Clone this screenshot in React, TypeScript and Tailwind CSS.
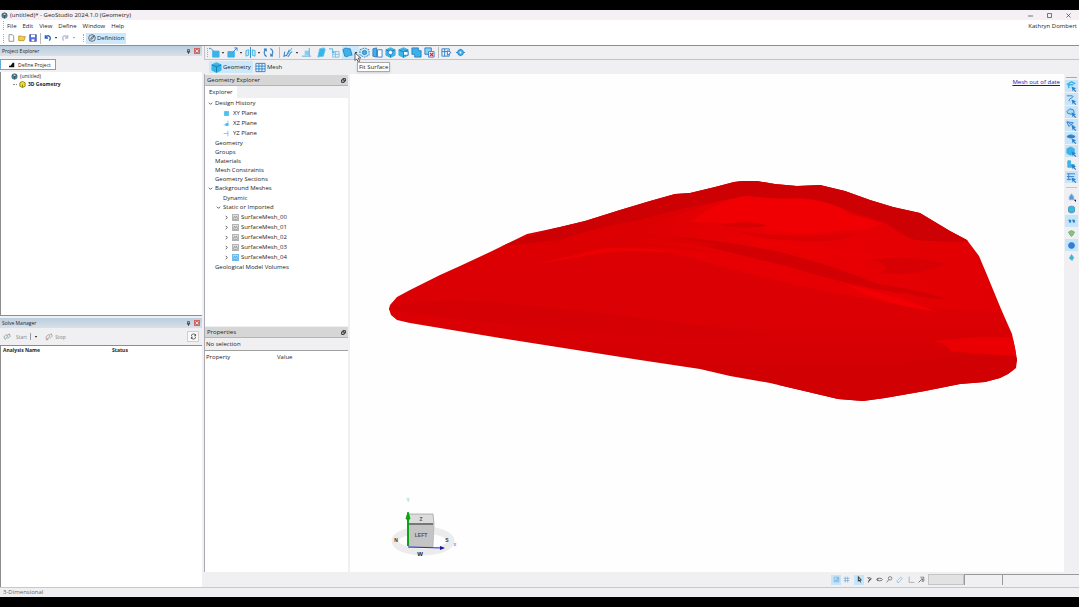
import { useState, type ReactNode } from 'react';

const blue = '#3bb3e6';
const dark = '#2f7fc8';

interface TreeItem {
  label: string;
  indent: string;
  kind?: 'group' | 'plane' | 'mesh';
  icon?: ReactNode;
}

function Svg({ children, size = 'size-[11px]' }: { children: ReactNode; size?: string }) {
  return (
    <svg viewBox="0 0 12 12" className={`${size} shrink-0`} fill="none" stroke={dark} strokeWidth="1">
      {children}
    </svg>
  );
}

const Cube = () => (
  <>
    <path d="M6 .8 11 3v6L6 11.4 1 9V3Z" fill={blue} stroke={blue} />
    <path d="M1 3l5 2.3L11 3M6 5.3v6" stroke="#1479b4" />
  </>
);

const Grid = () => (
  <>
    <path d="M1 1.5h10v9H1z" fill="#eaf6fd" />
    <path d="M1 4.5h10M1 7.5h10M4.3 1.5v9M7.6 1.5v9" />
  </>
);

const Caret = () => (
  <svg viewBox="0 0 4 4" className="size-[4px] shrink-0">
    <path d="M.8 1h2.4L2 2.800Z" fill="#222" />
  </svg>
);

const Pointer = () => <path d="M6 6l5 2-2 .9 2.2 2.3-.9.8L8 9.7 7.3 11.5Z" fill={dark} stroke="none" />;

const Globe = () => (
  <svg viewBox="0 0 12 12" className="size-[7px] shrink-0">
    <circle cx="6" cy="6" r="5.2" fill="#4d7f93" />
    <path d="M2 4l4-2 4 2-4 2ZM6 6v5" fill="#c9dde4" stroke="#203c48" />
  </svg>
);

const Grip = () => <span className="h-[9px] w-px shrink-0 border-l border-dotted border-[#a5a8ad]" />;
const Divider = () => <span className="h-[11px] w-px shrink-0 bg-[#b5b8bd]" />;

interface Tool {
  name: string;
  width: string;
  caret?: boolean;
  active?: boolean;
  art: ReactNode;
}

const tools: Tool[] = [
  { name: 'Sketch point', width: 'w-[18px]', caret: true, art: <><path d="M4 4.5h7v6.5H4z" fill={blue} stroke={blue} /><path d="M0 1.5h2l3 3" /></> },
  { name: 'Extrude', width: 'w-[18px]', caret: true, art: <><path d="M1 5h7v6H1z" fill={blue} stroke={blue} /><path d="M7 5l4-4M8 1h3v3" /></> },
  { name: 'Mirror', width: 'w-[18px]', caret: true, art: <><path d="M6 0v12" /><path d="M4 3v6L1 10V4ZM8 3v6l3 1V4Z" fill="#bfe6f8" stroke={blue} /></> },
  { name: 'Rotate', width: 'w-[16px]', art: <path d="M4 10.300A4.600 4.600 0 0 1 3 2.500M8 1.700A4.600 4.600 0 0 1 9 9.500M1 2.300h2.500v2.600M11 9.700H8.500V7.100" strokeWidth="1.200" /> },
];

const sketchTools: Tool[] = [
  { name: 'Draw line', width: 'w-[18px]', caret: true, art: <><path d="M2 5l-1 5 3-1 3-6M5 10c2 1 1-3 5-5" strokeWidth="1.100" /><path d="M5 8l5-7" stroke={blue} /></> },
  { name: 'Add plane', width: 'w-[15px]', art: <><path d="M4 4h5v5H4z" fill="#84d0f1" stroke="none" /><path d="M1 10h10M9 1v9" stroke="#62a9cf" /></> },
  { name: 'Loft', width: 'w-[13px]', art: <path d="M4 2l5-1 1 2-2 7-6 1Z" fill={blue} stroke="#62c2ec" /> },
  { name: 'Import', width: 'w-[13px]', art: <><path d="M4 5h7v6H4zM4 8h7M7 5v6" stroke="#7dbce4" /><path d="M0 2h4v4h2" stroke={blue} /></> },
  { name: 'Fit Surface', width: 'w-[17px]', caret: true, active: true, art: <path d="M1 3c2-3 5-1 8-1l2 7c-3-1-5 3-8 1Z" fill={blue} /> },
  { name: 'Imprint', width: 'w-[13px]', art: <><path d="M1 3l5-2 5 2v6l-5 2-5-2Z" fill="#c5e9fa" strokeDasharray="2 1" /><circle cx="6" cy="6" r="2.300" fill={blue} /></> },
  { name: 'Split', width: 'w-[13px]', art: <><path d="M1 2l4-1v10l-4-1Z" fill={blue} /><path d="M6 3h5v8H6z" fill="#fff" /></> },
  { name: 'Cavity', width: 'w-[13px]', art: <><Cube /><circle cx="6" cy="6" r="2.400" fill="#fff" /></> },
  { name: 'Subtract', width: 'w-[13px]', art: <><Cube /><path d="M6 5h5v4H6z" fill="#fff" /></> },
  { name: 'Union', width: 'w-[13px]', art: <path d="M1 1h7v3h3v7H4V8H1Z" fill={blue} /> },
  { name: 'Delete', width: 'w-[14px]', art: <><path d="M1 1h7v7H1z" fill="#8bd1f3" /><path d="M5 5h6v6H5z" fill="#fff" /><path d="M6.500 6.500l3.500 3.500m0-3.500L6.500 10" stroke="#e12020" strokeWidth="1.300" /></> },
];

const checkTools: Tool[] = [
  { name: 'Mesh settings', width: 'w-[14px]', art: <><path d="M1 2h8v8H1zM1 5h8M4 2v8" /><path d="M7 4l4 2-4 3Z" fill="#fff" /></> },
  { name: 'Inspect', width: 'w-[12px]', art: <><path d="M1 6h10M6 2v8" /><circle cx="6" cy="6" r="3.200" fill={blue} /><circle cx="6" cy="6" r="1" fill="#fff" stroke="none" /></> },
];

function ToolButton({ tool }: { tool: Tool }) {
  return (
    <button
      aria-label={tool.name}
      className={`flex h-[13px] items-center ${tool.width} ${tool.active ? 'bg-[#cde8fb]' : ''}`}
    >
      <Svg>{tool.art}</Svg>
      {tool.caret && <span className="ml-px"><Caret /></span>}
    </button>
  );
}

const meshIcon = (fill: string, line: string) => (
  <svg viewBox="0 0 10 10" className="size-[7px] shrink-0" fill={fill} stroke={line}>
    <path d="M.5.500h9v9h-9z" />
    <path d="M2 7l1.500-4L5 6l1.500-3L8 7M2 8h6" fill="none" />
  </svg>
);

const plane = (d: string, fill: string) => (
  <svg viewBox="0 0 10 10" className="size-[7px] shrink-0">
    <path d={d} fill={fill} stroke="#4cb7e6" />
  </svg>
);

const treeItems: TreeItem[] = [
  { label: 'Design History', indent: 'pl-[2px]', kind: 'group' },
  { label: 'XY Plane', indent: 'pl-[17px]', kind: 'plane', icon: plane('M2 2h6v6H2z', '#4cc2ee') },
  { label: 'XZ Plane', indent: 'pl-[17px]', kind: 'plane', icon: plane('M7 1v6M1 7h8M4 5h3v3H4z', '#4cc2ee') },
  { label: 'YZ Plane', indent: 'pl-[17px]', kind: 'plane', icon: plane('M7 1v8M1 5h6', 'none') },
  { label: 'Geometry', indent: 'pl-[9px]' },
  { label: 'Groups', indent: 'pl-[9px]' },
  { label: 'Materials', indent: 'pl-[9px]' },
  { label: 'Mesh Constraints', indent: 'pl-[9px]' },
  { label: 'Geometry Sections', indent: 'pl-[9px]' },
  { label: 'Background Meshes', indent: 'pl-[2px]', kind: 'group' },
  { label: 'Dynamic', indent: 'pl-[17px]' },
  { label: 'Static or Imported', indent: 'pl-[10px]', kind: 'group' },
  { label: 'SurfaceMesh_00', indent: 'pl-[18px]', kind: 'mesh', icon: meshIcon('#e0e0e0', '#8d8d8d') },
  { label: 'SurfaceMesh_01', indent: 'pl-[18px]', kind: 'mesh', icon: meshIcon('#e0e0e0', '#8d8d8d') },
  { label: 'SurfaceMesh_02', indent: 'pl-[18px]', kind: 'mesh', icon: meshIcon('#e0e0e0', '#8d8d8d') },
  { label: 'SurfaceMesh_03', indent: 'pl-[18px]', kind: 'mesh', icon: meshIcon('#e0e0e0', '#8d8d8d') },
  { label: 'SurfaceMesh_04', indent: 'pl-[18px]', kind: 'mesh', icon: meshIcon('#a5dcfa', '#369ce0') },
  { label: 'Geological Model Volumes', indent: 'pl-[9px]' },
];

function Chevron({ open }: { open: boolean }) {
  return (
    <svg viewBox="0 0 6 6" className="size-[5px] shrink-0" fill="none" stroke="#444">
      <path d={open ? 'M1 2l2 2 2-2' : 'M2 1l2 2-2 2'} />
    </svg>
  );
}

function TreeRow({ item }: { item: TreeItem }) {
  const tall = item.kind ? 'h-[10px]' : 'h-[9px]';
  return (
    <li className={`flex items-center ${tall} ${item.indent}`}>
      {(item.kind === 'group' || item.kind === 'mesh') && (
        <span className={item.kind === 'mesh' ? 'mr-[3px]' : 'mr-[2px]'}>
          <Chevron open={item.kind === 'group'} />
        </span>
      )}
      {item.icon && <span className={item.kind === 'plane' ? 'mr-[3px]' : 'mr-[2px]'}>{item.icon}</span>}
      <span>{item.label}</span>
    </li>
  );
}

function FloatIcon() {
  return (
    <svg viewBox="0 0 8 8" className="size-[5px]" fill="#ddd" stroke="#111" strokeWidth="1.300">
      <path d="M3 1h4v4H3z" />
      <path d="M1 3h4v4H1z" />
    </svg>
  );
}

function PanelHeader({ title }: { title: string }) {
  return (
    <div className="flex h-[11px] shrink-0 items-center justify-between border-b border-[#b4b4b4] bg-[#d6d6d7] px-[2px]">
      <h2>{title}</h2>
      <button aria-label={`Float ${title}`}><FloatIcon /></button>
    </div>
  );
}

function DockHeader({ title }: { title: string }) {
  return (
    <div className="flex h-[10px] shrink-0 items-center justify-between bg-gradient-to-b from-[#bccddd] to-[#d7e1eb] px-[2px]">
      <h2 className="text-[5px]">{title}</h2>
      <div className="flex items-center gap-[3px]">
        <button aria-label={`Pin ${title}`}>
          <svg viewBox="0 0 6 6" className="size-[5px]" stroke="#222" strokeWidth=".8" fill="none"><path d="M2 .5h2v3H2zM1 3.500h4M3 3.500V6" /></svg>
        </button>
        <button aria-label={`Close ${title}`} className="bg-[#cf6862]">
          <svg viewBox="0 0 6 6" className="size-[6px]" stroke="#f3dcda"><path d="M1.500 1.500l3 3m0-3l-3 3" /></svg>
        </button>
      </div>
    </div>
  );
}

function LeftColumn() {
  return (
    <aside className="flex w-[202px] shrink-0 flex-col">
      <section className="flex h-[270px] flex-col border-b border-[#8c8c8c]">
        <DockHeader title="Project Explorer" />
        <div className="h-[16px] shrink-0 pt-[3px]">
          <button className="flex h-[11px] w-[56px] items-center gap-[3px] border border-[#62a8dc] bg-white pl-[8px] text-[5px]">
            <svg viewBox="0 0 8 8" className="size-[6px] shrink-0"><path d="M0 5h2l3-4h2v6H0Z" fill="#111" /></svg>
            Define Project
          </button>
        </div>
        <ul className="flex-1 border-l border-[#8c8c8c] bg-white text-[5px]">
          <li className="flex h-[8px] items-center gap-[2px] pl-[10px]"><Globe />(untitled)</li>
          <li className="flex h-[8px] items-center gap-[2px] pl-[12px] font-bold">
            <span className="w-[4px] border-t border-dotted border-[#888]" />
            <svg viewBox="0 0 8 8" className="size-[7px]"><path d="M4 .5l3 1.500v4L4 7.500 1 6V2Z" fill="#f4e22c" stroke="#8a7a10" /><path d="M4 4v3" stroke="#8a7a10" /></svg>
            3D Geometry
          </li>
        </ul>
      </section>
      <section className="mt-[2px] flex min-h-0 flex-1 flex-col">
        <DockHeader title="Solve Manager" />
        <div className="flex h-[17px] shrink-0 items-center px-[3px] text-[5px] text-[#858585]">
          <button disabled className="flex items-center gap-[5px]">
            <svg viewBox="0 0 10 10" className="size-[8px]" fill="#e6ebeb" stroke="#8b9999"><path d="M1 5l3-3 2 2-3 4ZM5 3l3-2 1 3-3 3" /></svg>
            Start
          </button>
          <span className="mx-[3px] h-[7px] w-px bg-[#999]" />
          <button disabled aria-label="Start options" className="mr-[7px]"><Caret /></button>
          <button disabled className="flex items-center gap-[2px]">
            <svg viewBox="0 0 10 10" className="size-[8px]" fill="#eee" stroke="#a09999"><path d="M1 5l3-3 2 2-3 4ZM5 3l3-2 1 3-3 3" /><path d="M1 7h3v2H1z" fill="#d79a94" stroke="none" /></svg>
            Stop
          </button>
          <button aria-label="Refresh" className="ml-auto flex h-[11px] w-[12px] items-center justify-center border border-[#cfcfcf] bg-[#fafafa]">
            <svg viewBox="0 0 10 10" className="size-[7px]" fill="none" stroke="#333"><path d="M2 4.500A3 3 0 0 1 8 4M8 5.500A3 3 0 0 1 2 6M8 1.500V4H6M2 8.500V6h2" /></svg>
          </button>
        </div>
        <div className="flex-1 border-t border-l border-[#8c8c8c] bg-white">
          <table className="w-full text-left text-[5px] leading-[9px]">
            <thead>
              <tr>
                <th className="w-[111px] pl-[2px]">Analysis Name</th>
                <th>Status</th>
              </tr>
            </thead>
          </table>
        </div>
      </section>
    </aside>
  );
}

function GeometryColumn() {
  return (
    <aside className="flex w-[144px] shrink-0 flex-col border-l border-[#aaaab4] pt-px">
      <section className="flex h-[251px] flex-col">
        <PanelHeader title="Geometry Explorer" />
        <div role="tablist" className="flex h-[12px] shrink-0">
          <button role="tab" aria-selected="true" className="bg-white px-[4px]">Explorer</button>
        </div>
        <ul className="flex-1 bg-white pl-px">
          {treeItems.map((item) => (
            <TreeRow key={item.label} item={item} />
          ))}
        </ul>
      </section>
      <section className="mt-px flex min-h-0 flex-1 flex-col">
        <PanelHeader title="Properties" />
        <p className="h-[12px] shrink-0 pl-px leading-[12px]">No selection</p>
        <div className="flex-1 border-t border-[#a0a0a0] bg-white">
          <table className="w-full text-left leading-[12px]">
            <thead>
              <tr>
                <th className="w-[72px] pl-px font-normal">Property</th>
                <th className="font-normal">Value</th>
              </tr>
            </thead>
          </table>
        </div>
      </section>
    </aside>
  );
}

const outline =
  'M389 309L390 305L397 297L410 290L440 275L460 266L490 252L527 234L560 227L585 221L620 210L650 201L675 194L690 193L715 187L734 182L742 181L757 181L775 184L797 186L820 185L845 191L870 200L893 207L920 213L950 231L967 240L979 256L987 275L1001 309L1012 334L1015 348L1017 360L1016 368L1008 374L1000 378L985 382L960 384L925 391L885 398L863 401L838 399L800 390L770 383L730 376L700 369L640 360L570 349L500 338L410 323L397 320L391 315Z';

function SurfaceModel() {
  return (
    <svg viewBox="350 74 714 498" className="size-full" role="img" aria-label="Surface mesh model">
      <defs>
        <clipPath id="body">
          <path d={outline} />
        </clipPath>
        <linearGradient id="base" x1="0" y1="0" x2="0" y2="1">
          <stop offset="0" stopColor="#de0003" />
          <stop offset=".65" stopColor="#da0003" />
          <stop offset="1" stopColor="#cd0003" />
        </linearGradient>
        <linearGradient id="slope" x1="0" y1="0" x2="1" y2="0">
          <stop offset="0" stopColor="#da0003" />
          <stop offset=".4" stopColor="#ea0003" />
          <stop offset="1" stopColor="#e00003" />
        </linearGradient>
      </defs>
      <path d={outline} fill="url(#base)" />
      <g clipPath="url(#body)">
        <path d="M500 246L675 188L740 175L820 180L920 210L975 240Q940 244 912 240Q900 230 885 223L845 209Q820 199 800 198Q770 199 745 196L710 203Q665 212 640 220Q600 226 560 240Z" fill="#cd0003" />
        <path d="M610 240Q650 226 670 218Q710 202 745 196Q770 200 800 198Q830 200 850 214L885 223Q900 236 915 240L968 243L985 275L1002 312L930 308L850 284L750 260L690 248Z" fill="url(#slope)" />
        <path d="M690 222Q720 200 745 196L782 199Q830 198 850 214L882 223Q870 232 840 230Q800 236 770 229Q740 222 690 222Z" fill="#f00003" />
        <path d="M530 266Q570 256 600 249Q640 245 690 254Q640 250 610 252Q570 258 530 266Z" fill="#ec0003" />
        <path d="M650 247Q720 252 790 263Q850 280 900 295L940 313Q870 300 800 286Q740 272 650 247Z" fill="#e60003" />
        <path d="M668 237Q710 238 780 252Q840 268 870 281L905 294Q845 285 790 267Q740 255 668 237Z" fill="#d20003" />
        <path d="M638 235Q675 235 720 246Q685 245 638 235ZM735 230Q780 239 860 233Q830 246 790 240Q755 240 735 230Z" fill="#dc0003" />
        <path d="M740 238L860 256L920 276M770 243L850 263L910 280M720 236L800 249M800 250L900 258" fill="none" stroke="#f00003" strokeWidth="2" opacity=".4" />
        <path d="M845 284Q890 294 935 311Q880 304 845 284Z" fill="#f20003" />
        <path d="M719 225Q752 219 768 226Q745 230 719 225ZM870 260Q910 254 945 264Q920 277 880 273Q895 265 870 260Z" fill="#d70003" />
        <path d="M876 284Q900 286 945 298Q930 302 876 284Z" fill="#d20003" />
        <path d="M935 341Q980 335 1013 338L1018 356Q980 354 950 351Q950 346 935 341Z" fill="#ea0003" />
        <path d="M840 376Q900 366 950 356Q985 353 1018 357L1010 382L863 404L760 388Z" fill="#d00003" />
        <path d="M386 309Q430 295 520 305Q630 315 770 335Q720 342 640 336Q500 326 386 309Z" fill="#d50003" />
      </g>
    </svg>
  );
}

function NavigationCube() {
  return (
    <svg viewBox="0 0 70 64" className="h-[64px] w-[70px]" fontFamily="Liberation Sans, sans-serif" fontWeight="bold">
      <ellipse cx="33" cy="46" rx="28" ry="11" fill="none" stroke="#ececec" strokeWidth="7" />
      <path d="M19 19h24l1 10H18Z" fill="#dcdcdc" stroke="#999" strokeWidth=".7" />
      <path d="M18 29h26l-1 23H19Z" fill="#c4c4c4" stroke="#b0b0b0" strokeWidth=".7" />
      <path d="M19 29h24" stroke="#333" />
      <text x="31" y="42" fontSize="5" textAnchor="middle" fill="#555">LEFT</text>
      <text x="31" y="26" fontSize="5" textAnchor="middle" fill="#555">Z</text>
      <text x="6" y="47" fontSize="5" textAnchor="middle" fill="#333">N</text>
      <text x="57" y="47" fontSize="5" textAnchor="middle" fill="#333">S</text>
      <text x="30" y="61" fontSize="6" textAnchor="middle" fill="#222">W</text>
      <path d="M18 51V19" stroke="#0ca316" strokeWidth="2" />
      <path d="M18 17l2 7h-4Z" fill="#0ca316" stroke="#0ca316" />
      <path d="M18 52l34 1" stroke="#2828d8" />
      <path d="M50 51l5 2-5 2Z" fill="#1717a0" />
      <text x="18" y="7" fontSize="5" textAnchor="middle" fill="#68e5dd">Y</text>
      <text x="65" y="51" fontSize="5" textAnchor="middle" fill="#8b8bec">x</text>
    </svg>
  );
}

const selectModes = [
  { name: 'Select all', on: true, art: <path d="M1 4l5-3 4 2M3 4v4M2 4h6" stroke={blue} strokeWidth="1.600" /> },
  { name: 'Select lines', on: true, art: <path d="M1 2h6c3 2-6 3-3 6" /> },
  { name: 'Select volumes', on: true, art: <path d="M1 5l3-3 4 1 1 3-3 2-4-1Z" fill="#a5dbf3" /> },
  { name: 'Select edges', on: true, art: <path d="M1 2l7 1-5 4ZM1 2l8 5" fill="#cde6f5" /> },
  { name: 'Select faces', on: true, art: <path d="M1 4c3-3 7-2 9 0-3 2-6 2-9 0Z" fill={dark} /> },
  { name: 'Select solids', on: true, art: <path d="M1 3l4-2 4 2v5l-4 2-4-2Z" fill={blue} stroke={blue} /> },
  { name: 'Select bodies', on: false, art: <path d="M2 2h3v4h4v3H2Z" fill={blue} stroke={blue} /> },
  { name: 'Select meshes', on: true, art: <path d="M1 2h9M1 5h8M1 8h5M3 2v7" /> },
];

const viewModes = [
  { name: 'View fit', on: false, art: <><path d="M6 1l3 4v4H3V5Z" fill="#5f97df" stroke="#83b8e8" /><path d="M9 9h3v3Z" fill="#111" stroke="none" /></> },
  { name: 'View solid', on: false, art: <path d="M2 3c2-2 6-2 8 0v6c-2 2-6 2-8 0Z" fill="#35bfd0" stroke="#4385c8" /> },
  { name: 'View points', on: true, art: <path d="M2 4h3v3H3M7 4h3v3H8" fill={dark} /> },
  { name: 'View materials', on: false, art: <path d="M2 4l4-2 4 2-2 4-2 2-2-2Z" fill="#7ecb67" stroke="#6d9d9a" /> },
  { name: 'View shaded', on: true, art: <circle cx="6" cy="6" r="4" fill="#347fd6" /> },
  { name: 'View section', on: false, art: <path d="M6 2l3 4-2 4-4-3Z" fill="#38b5cf" stroke="#54b9d9" /> },
];

function SideStrip() {
  return (
    <nav aria-label="View tools" className="flex w-[15px] shrink-0 flex-col items-center bg-[#f0f0f2] pt-[3px]">
      <span className="mb-[2px] h-px w-[11px] bg-[#aaa]" />
      {selectModes.map((m) => (
        <button key={m.name} aria-label={m.name} className={`mb-px flex h-[12px] w-[13px] items-center justify-center ${m.on ? 'bg-[#c7e5fa]' : ''}`}>
          <Svg>{m.art}<Pointer /></Svg>
        </button>
      ))}
      <span className="my-[3px] h-px w-[11px] bg-[#c5c5c5]" />
      {viewModes.map((m) => (
        <button key={m.name} aria-label={m.name} className={`flex h-[12px] w-[13px] items-center justify-center ${m.on ? 'bg-[#c7e5fa]' : ''}`}>
          <Svg size="size-[9px]">{m.art}</Svg>
        </button>
      ))}
    </nav>
  );
}

const viewportTools = [
  { name: 'Snap', on: true, art: <path d="M2 2h8v8H2zM4 8l4-5v5Z" stroke="#5b9fd2" /> },
  { name: 'Grid', on: false, art: <path d="M4 1v10M8 1v10M1 4h10M1 8h10" stroke="#5b9fd2" /> },
  { name: 'Select', on: true, art: <path d="M4 1l5 6H6l2 4M4 1v8l2-2" stroke="#111" strokeWidth="1.400" /> },
  { name: 'Pan', on: false, art: <path d="M3 2l3 4-2 5M6 2l3 3-3 3" stroke="#222" strokeWidth="1.400" /> },
  { name: 'Orbit', on: false, art: <path d="M1 6c0-3 10-3 10 0s-10 3-10 0M3 4v4" stroke="#222" /> },
  { name: 'Zoom', on: false, art: <><circle cx="7" cy="4" r="3" stroke="#444" /><path d="M5 6l-4 5" stroke="#444" /></> },
  { name: 'Measure', on: false, art: <path d="M2 8l6-6 3 2-6 7H2Z" stroke="#6aade0" /> },
];

const axisTools = [
  { name: 'Axes', art: <path d="M2 1v10h9" stroke="#888" /> },
  { name: 'Zoom box', art: <><path d="M4 2h6v7H6" stroke="#444" /><path d="M6 6l-5 5M5 5h3v3" stroke="#222" /></> },
];

function ViewportBar() {
  return (
    <div className="flex h-[15px] shrink-0 items-center justify-end bg-[#f0f0f2]">
      {viewportTools.map((t) => (
        <button key={t.name} aria-label={t.name} className={`flex h-[10px] w-[10px] items-center justify-center ${t.on ? 'bg-[#c7e5fa]' : ''} ${t.name === 'Select' ? 'ml-[3px]' : ''}`}>
          <Svg size="size-[7px]">{t.art}</Svg>
        </button>
      ))}
      <span className="w-[2px]" />
      {axisTools.map((t) => (
        <button key={t.name} aria-label={t.name} className="flex size-[10px] items-center justify-center">
          <Svg size="size-[7px]">{t.art}</Svg>
        </button>
      ))}
      <span className="ml-[2px] h-[11px] w-[36px] border border-[#c4c4c4] bg-[#e2e2e3]" />
      <span className="h-[11px] w-[38px] border-t border-l border-[#999]" />
      <span className="h-[11px] w-[77px] border-t border-l border-[#999]" />
    </div>
  );
}

export default function App() {
  const [mode, setMode] = useState('Geometry');

  return (
    <div className="flex h-screen flex-col overflow-hidden border-y-[10px] border-black bg-[#f0f0f2] font-['Open_Sans','Noto_Sans',sans-serif] text-[6px] leading-[8px] text-[#1e1e1e]">
      <header className="shrink-0 border-b border-[#8d8d92] bg-white">
        <div className="flex h-[10px] items-center gap-[2px] bg-[#f4f0f3] px-px">
          <Globe />
          <h1>(untitled)* - GeoStudio 2024.1.0 (Geometry)</h1>
          <div className="mr-[7px] ml-auto flex gap-[14px]">
            {['M0 3h5', 'M.5.500h4v4h-4z', 'M.5.500l4 4m0-4l-4 4'].map((d, i) => (
              <button key={d} aria-label={['Minimize', 'Restore', 'Close'][i]}>
                <svg viewBox="0 0 5 5" className="size-[5px]" fill="none" stroke="#444" strokeWidth=".7"><path d={d} /></svg>
              </button>
            ))}
          </div>
        </div>
        <div className="flex h-[11px] items-center pr-[2px] pl-[3px]">
          <Grip />
          <nav aria-label="Main menu" className="ml-[3px] flex gap-[6px]">
            {['File', 'Edit', 'View', 'Define', 'Window', 'Help'].map((name) => (
              <button key={name}>{name}</button>
            ))}
          </nav>
          <span className="ml-auto">Kathryn Dombert</span>
        </div>
        <div className="flex h-[14px] items-center pl-[3px]">
          <Grip />
          <div className="ml-[3px] flex items-center gap-[3px]">
            <button aria-label="New"><Svg size="size-[8px]"><path d="M3 1h5l2 2v8H3Z" stroke="#666" fill="#fff" /></Svg></button>
            <button aria-label="Open"><Svg size="size-[8px]"><path d="M1 10V3h4l1 1h5L9 10Z" fill="#f5ce45" stroke="#a98512" /></Svg></button>
            <button aria-label="Save"><Svg size="size-[8px]"><path d="M1 1h10v10H1z" fill="#5b6fe0" stroke="#3b45a8" /><path d="M3 1h6v4H3zM4 8h4v3H4z" fill="#fff" stroke="none" /></Svg></button>
            <Divider />
            <button aria-label="Undo" className="flex items-center gap-[2px]"><Svg size="size-[8px]"><path d="M2 2v4h4M2 5c4-5 10-1 6 5" stroke="#2862b8" strokeWidth="2" /></Svg><Caret /></button>
            <button aria-label="Redo" disabled className="flex items-center gap-[3px] opacity-40"><Svg size="size-[8px]"><path d="M10 2v4H6M10 5C6 0 0 4 4 10" stroke="#4a5a9b" strokeWidth="2" /></Svg><Caret /></button>
          </div>
          <span className="ml-[7px]"><Grip /></span>
          <button className="ml-[2px] flex h-[11px] w-[40px] items-center gap-px bg-[#cde8fb] pl-[2px]">
            <Svg size="size-[8px]"><circle cx="6" cy="6" r="5" stroke="#333" /><path d="M4 8l1-3 4-2-2 4Z" stroke="#333" /></Svg>
            Definition
          </button>
        </div>
      </header>

      <div className="flex min-h-0 flex-1">
        <LeftColumn />
        <main className="ml-[2px] flex min-w-0 flex-1 flex-col">
          <div className="flex h-[14px] shrink-0 items-center border-b border-l border-[#c4c4c8] pl-[2px]">
            <Grip />
            <div className="ml-px flex">{tools.map((t) => <ToolButton key={t.name} tool={t} />)}</div>
            <Divider />
            <div className="ml-[3px] flex">
              {sketchTools.map((t) =>
                t.active ? (
                  <div key={t.name} className="relative">
                    <ToolButton tool={t} />
                    <svg viewBox="0 0 8 12" className="absolute top-[7px] left-[12px] z-10 h-[10px] w-[7px]"><path d="M1 0v9l2-2 2 4 1.500-1L5 6h3Z" fill="#fff" stroke="#444" /></svg>
                    <span role="tooltip" className="absolute top-[16px] left-[15px] z-10 border border-[#aaa] bg-white px-px leading-[8px] whitespace-nowrap shadow-sm">Fit Surface</span>
                  </div>
                ) : (
                  <ToolButton key={t.name} tool={t} />
                ),
              )}
            </div>
            <Divider />
            <div className="ml-[2px] flex">{checkTools.map((t) => <ToolButton key={t.name} tool={t} />)}</div>
          </div>
          <div role="tablist" className="flex h-[14px] shrink-0 items-center pl-[5px]">
            {['Geometry', 'Mesh'].map((name) => (
              <button
                key={name}
                role="tab"
                aria-selected={mode === name}
                onClick={() => setMode(name)}
                className={`flex h-[12px] items-center gap-px px-[2px] ${mode === name ? 'bg-[#cde8fb]' : ''}`}
              >
                <Svg>{name === 'Geometry' ? <Cube /> : <Grid />}</Svg>
                {name}
              </button>
            ))}
          </div>

          <div className="flex min-h-0 flex-1">
            <div className="flex min-w-0 flex-1 flex-col">
              <div className="flex min-h-0 flex-1">
                <GeometryColumn />
                <div className="relative ml-[2px] min-w-0 flex-1 bg-[#fefefe]">
                  <SurfaceModel />
                  <a href="#mesh" className="absolute top-[4px] right-[4px] text-[#1414b8] underline">Mesh out of date</a>
                  <div className="absolute bottom-[13px] left-[40px]"><NavigationCube /></div>
                </div>
                <SideStrip />
              </div>
              <ViewportBar />
            </div>
          </div>
        </main>
      </div>

      <footer className="h-[10px] shrink-0 border-t border-[#c8c8c4] pl-[3px] leading-[9px] text-[#666]">3-Dimensional</footer>
    </div>
  );
}
